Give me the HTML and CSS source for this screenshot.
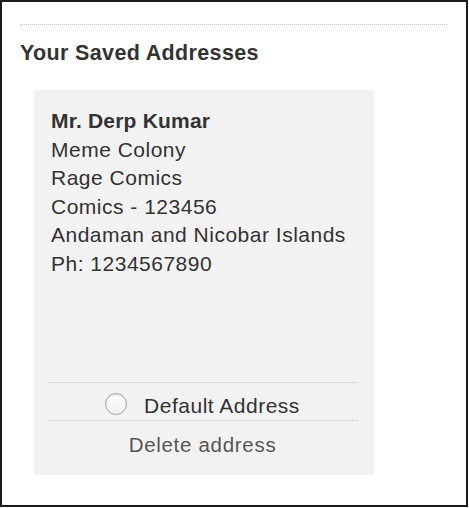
FILE: index.html
```html
<!DOCTYPE html>
<html>
<head>
<meta charset="utf-8">
<link rel="stylesheet" href="styles.css">
</head>
<body>
<div class="frame">
  <div class="rule"></div>
  <h2 class="title">Your Saved Addresses</h2>
  <div class="card">
    <div class="address">
      <div class="name">Mr. Derp Kumar</div>
      <div>Meme Colony</div>
      <div>Rage Comics</div>
      <div>Comics - 123456</div>
      <div>Andaman and Nicobar Islands</div>
      <div>Ph: 1234567890</div>
    </div>
    <div class="footer">
      <label class="default-row"><span class="radio"></span><span>Default Address</span></label>
      <div class="delete">Delete address</div>
    </div>
  </div>
</div>
</body>
</html>
```

FILE: styles.css
```css
html, body {
  margin: 0;
  padding: 0;
  background: #fff;
}
body {
  font-family: "Liberation Sans", Arial, Helvetica, sans-serif;
  color: #333;
}
.frame {
  box-sizing: border-box;
  width: 468px;
  height: 507px;
  border: 2px solid #1c1c1c;
  padding: 22px 19px 0 18px;
}
.rule {
  border-top: 1px dotted #c8c8c8;
  height: 0;
}
.title {
  margin: 16px 0 0 0;
  font-size: 21.5px;
  letter-spacing: 0.35px;
  font-weight: bold;
  line-height: 24px;
  color: #333;
}
.card {
  margin: 25px 0 0 14px;
  width: 340px;
  height: 385px;
  box-sizing: border-box;
  background: #f2f2f2;
  padding: 17px 17px 0 17px;
  display: flex;
  flex-direction: column;
}
.address {
  font-size: 21px;
  letter-spacing: 0.5px;
  line-height: 28.6px;
  color: #333;
  flex: 1;
}
.name {
  font-weight: bold;
  letter-spacing: 0.2px;
}
.footer {
  margin: 0 0 0 -3px;
  display: flex;
  flex-direction: column;
  align-items: stretch;
}
.default-row {
  border-top: 1px dotted #c4c4c4;
  border-bottom: 1px dotted #c4c4c4;
  height: 39px;
  box-sizing: border-box;
  padding-top: 8px;
  display: flex;
  align-items: center;
  justify-content: center;
  gap: 17px;
  font-size: 21px;
  letter-spacing: 0.5px;
  line-height: 24px;
  color: #333;
}
.radio {
  width: 20px;
  height: 20px;
  border-radius: 50%;
  border: 1px solid #a8a8a8;
  background: linear-gradient(#ffffff, #f0f0f0);
  box-shadow: inset 0 1px 2px rgba(0,0,0,0.15);
  flex: none;
  margin-top: -3px;
}
.delete {
  text-align: center;
  font-size: 20.5px;
  letter-spacing: 0.7px;
  color: #555;
  height: 54px;
  padding-top: 12px;
  box-sizing: border-box;
  line-height: 24px;
}
```
